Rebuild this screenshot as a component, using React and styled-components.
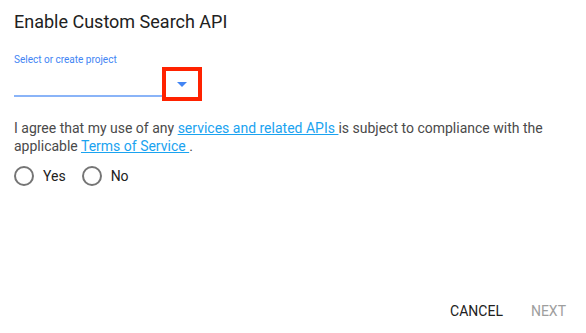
import React, { useState } from 'react'
import styled, { createGlobalStyle } from 'styled-components'

const GlobalStyle = createGlobalStyle`
  html, body {
    margin: 0;
    padding: 0;
    background: #ffffff;
  }
  body {
    font-family: Roboto, "Liberation Sans", Arial, sans-serif;
  }
`

function App() {
  const [agree, setAgree] = useState(null)

  return (
    <Dialog>
      <GlobalStyle />
      <Title>Enable Custom Search API</Title>
      <FieldLabel>Select or create project</FieldLabel>
      <SelectRow>
        <SelectLine />
        <ArrowBox>
          <Caret />
        </ArrowBox>
      </SelectRow>
      <Terms>
        I agree that my use of any <TermsLink href="#">services and related APIs </TermsLink> is subject to compliance with the applicable <TermsLink href="#">Terms of Service </TermsLink>.
      </Terms>
      <RadioGroup>
        <RadioOption onClick={() => setAgree(true)}>
          <RadioCircle checked={agree === true} />
          <RadioText>Yes</RadioText>
        </RadioOption>
        <RadioOption onClick={() => setAgree(false)}>
          <RadioCircle checked={agree === false} />
          <RadioText>No</RadioText>
        </RadioOption>
      </RadioGroup>
      <Footer>
        <FlatButton>Cancel</FlatButton>
        <FlatButton disabled>Next</FlatButton>
      </Footer>
    </Dialog>
  )
}

const Dialog = styled.div`
  width: 586px;
  height: 333px;
  box-sizing: border-box;
  padding: 12px 0 0 14px;
  display: flex;
  flex-direction: column;
  background: #fff;
  overflow: hidden;
`

const Title = styled.h2`
  margin: 0;
  font-size: 18px;
  font-weight: 400;
  line-height: 20px;
  color: #212121;
`

const FieldLabel = styled.div`
  margin-top: 22px;
  font-size: 10px;
  line-height: 12px;
  color: #4285f4;
`

const SelectRow = styled.div`
  display: flex;
  align-items: flex-end;
  margin-top: 1px;
  height: 34px;
`

const SelectLine = styled.div`
  width: 148px;
  height: 2px;
  margin-bottom: 4px;
  background: #8ab4f8;
`

const ArrowBox = styled.div`
  width: 40px;
  height: 34px;
  box-sizing: border-box;
  border: 4px solid #ff2200;
  display: flex;
  align-items: center;
  justify-content: center;
`

const Caret = styled.div`
  width: 0;
  height: 0;
  border-left: 5px solid transparent;
  border-right: 5px solid transparent;
  border-top: 5px solid #4285f4;
  margin-top: 1px;
`

const Terms = styled.p`
  margin: 18px 0 0;
  width: 545px;
  font-size: 14px;
  line-height: 18px;
  color: #4a4a4a;
`

const TermsLink = styled.a`
  color: #1aa3f0;
  text-decoration: underline;
`

const RadioGroup = styled.div`
  display: flex;
  gap: 16px;
  margin-top: 11px;
`

const RadioOption = styled.label`
  display: flex;
  align-items: center;
  gap: 9px;
  cursor: pointer;
`

const RadioCircle = styled.span`
  width: 20px;
  height: 20px;
  box-sizing: border-box;
  border-radius: 50%;
  border: 2px solid ${p => (p.checked ? '#4285f4' : '#757575')};
  box-shadow: ${p => (p.checked ? 'inset 0 0 0 3px #fff, inset 0 0 0 10px #4285f4' : 'none')};
`

const RadioText = styled.span`
  font-size: 14px;
  color: #212121;
`

const Footer = styled.div`
  margin-top: auto;
  display: flex;
  justify-content: flex-end;
  gap: 28px;
  padding: 0 20px 14px 0;
`

const FlatButton = styled.button`
  border: none;
  background: none;
  padding: 0;
  font-family: inherit;
  font-size: 14px;
  font-weight: 400;
  text-transform: uppercase;
  color: ${p => (p.disabled ? '#9e9e9e' : '#212121')};
  cursor: ${p => (p.disabled ? 'default' : 'pointer')};
`

export default App
